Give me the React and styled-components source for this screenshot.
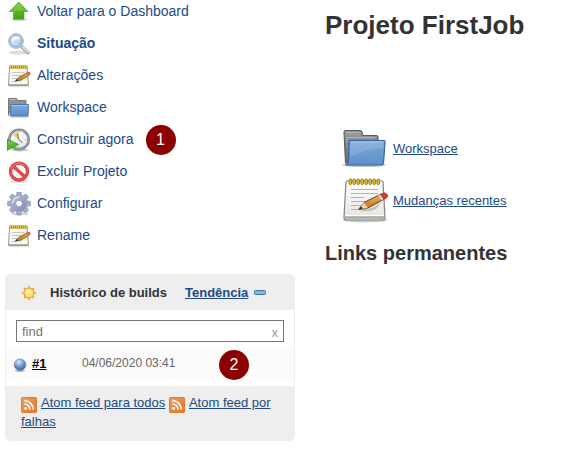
import React, { useState } from "react";
import styled, { createGlobalStyle } from "styled-components";

const GlobalStyle = createGlobalStyle`
  * {
    box-sizing: border-box;
  }
  body {
    margin: 0;
    background: #fff;
    color: #333;
    font-family: "Liberation Sans", Arial, sans-serif;
    font-size: 13px;
  }
  svg {
    display: block;
    flex-shrink: 0;
  }
`;

const Page = styled.div`
  display: grid;
  grid-template-columns: 290px minmax(0, 1fr);
  gap: 30px;
  padding: 0 5px;
  @media (max-width: 500px) {
    grid-template-columns: minmax(0, 1fr);
  }
`;
const Tasks = styled.nav`
  display: flex;
  flex-direction: column;
  gap: 8px;
`;
const Task = styled.div`
  display: flex;
  align-items: center;
  gap: 12px;
  height: 24px;
  padding-left: 2px;
`;
const TaskLink = styled.a`
  display: flex;
  gap: 6px;
  color: #204a87;
  font-size: 14px;
  line-height: 22px;
  font-weight: ${({ $active }) => ($active ? "bold" : "normal")};
  text-decoration: none;
`;
const Badge = styled.span`
  display: flex;
  align-items: center;
  justify-content: center;
  flex-shrink: 0;
  width: 30px;
  height: 30px;
  border-radius: 50%;
  background: #8b0000;
  color: #fff;
  font-size: 16px;
`;
const Builds = styled.section`
  margin-top: 26px;
  border: 1px solid #eee;
  border-radius: 5px;
  overflow: hidden;
`;
const BuildsHeader = styled.header`
  display: flex;
  align-items: center;
  height: 35px;
  padding: 0 15px;
  background: #eee;
  h2 {
    margin: 0 18px 0 13px;
    font-size: 13px;
  }
`;
const Link = styled.a`
  color: #204a87;
  font-size: 13px;
  font-weight: ${({ $bold }) => ($bold ? "bold" : "normal")};
  line-height: 18px;
`;
const CollapseButton = styled.button`
  margin: 0 0 0 6px;
  padding: 0;
  border: 0;
  background: none;
`;
const Search = styled.div`
  display: flex;
  align-items: center;
  height: 22px;
  margin: 10px 10px 8px;
  border: 1px solid #767676;
  input {
    flex: 1;
    min-width: 0;
    padding: 0 5px;
    border: 0;
    outline: 0;
    background: none;
    color: #757575;
    font: inherit;
  }
  input::placeholder {
    color: #757575;
  }
  button {
    padding: 2px 5px 0;
    border: 0;
    background: none;
    color: #999;
    font: inherit;
  }
`;
const BuildTable = styled.table`
  width: 100%;
  margin-bottom: 7px;
  border-collapse: collapse;
  background: #fbfbfb;
  td {
    height: 29px;
    padding: 0;
  }
`;
const BuildRow = styled.div`
  display: flex;
  align-items: center;
  height: 29px;
  padding-left: 7px;
`;
const BuildLink = styled.a`
  width: 50px;
  margin-left: 5px;
  padding-bottom: 3px;
  color: #000;
  font-weight: bold;
`;
const BuildDate = styled.span`
  width: 137px;
  padding-bottom: 3px;
  color: #666;
  font-size: 12px;
`;
const Feeds = styled.footer`
  padding: 8px 15px 9px;
  background: #eee;
  line-height: 18px;
  svg {
    display: inline-block;
    margin-right: 4px;
    vertical-align: -6px;
  }
`;
const Main = styled.main`
  h1 {
    margin: 0;
    padding-top: 10px;
    font-size: 26px;
    line-height: 30px;
  }
  h2 {
    margin: 17px 0 0;
    font-size: 20px;
    line-height: 24px;
  }
`;
const Shortcuts = styled.div`
  display: flex;
  flex-direction: column;
  gap: 4px;
  margin-top: 84px;
  padding-left: 16px;
`;
const Shortcut = styled.div`
  display: flex;
  align-items: center;
  gap: 4px;
  ${Link} {
    padding-top: 2px;
  }
`;

const Icon = ({ size = 24, children }) => (
  <svg width={size} height={size} viewBox="0 0 48 48" aria-hidden="true">
    {children}
  </svg>
);

const Gradient = ({ id, from, to, diagonal }) => (
  <linearGradient id={id} x1="0" y1="0" x2={diagonal ? 1 : 0} y2="1">
    <stop offset="0" stopColor={from} />
    <stop offset="1" stopColor={to} />
  </linearGradient>
);

const UpIcon = () => (
  <Icon>
    <Gradient id="up" from="#7cc63a" to="#43a012" />
    <ellipse cx="24" cy="39" rx="17" ry="3" fill="#000" opacity=".16" />
    <path
      d="M23.500 4 L42 23 H34 V38.500 H13 V23 H5 Z"
      fill="url(#up)"
      stroke="#479c1c"
      strokeWidth="1.200"
      strokeLinejoin="round"
    />
    <path d="M23.500 7 L36 21 H16 V32 L13.500 22 H9 Z" fill="#b5ee74" opacity=".25" />
  </Icon>
);

const SearchIcon = () => (
  <Icon>
    <Gradient id="lens" from="#f1f8ff" to="#9cc4f0" diagonal />
    <ellipse cx="23" cy="41" rx="20" ry="4" fill="#000" opacity=".13" />
    <path d="M29 29 L42 41" stroke="#9a9b9b" strokeWidth="7" strokeLinecap="round" />
    <path d="M31 30 L42 40" stroke="#dededc" strokeWidth="4" strokeLinecap="round" />
    <circle cx="18" cy="18" r="15" fill="#e0e2e4" stroke="#a9abaa" strokeWidth="1.500" />
    <circle cx="18" cy="18" r="12" fill="url(#lens)" stroke="#6e98cf" strokeWidth="2" />
    <path d="M9 19 Q10 9 19 9 Q25 9 27 13 Q18 13 9 19Z" fill="#fff" opacity=".75" />
  </Icon>
);

const NotepadIcon = () => (
  <Icon size={48}>
    <Gradient id="paper" from="#fff" to="#e3e3e0" />
    <Gradient id="pencil" from="#efb76b" to="#b66c16" />
    <ellipse cx="24" cy="44" rx="22" ry="2.500" fill="#000" opacity=".2" />
    <path
      d="M6 5 H41 Q42 5 42 6 L44 41 Q44 44 42 44 H5 Q3 44 3 41 L5 6 Q5 5 6 5Z"
      fill="url(#paper)"
      stroke="#83857f"
      strokeWidth="1.200"
    />
    <path d="M4 39.500 H43" stroke="#fff" strokeWidth="1" />
    <path d="M4 41.500 H43.500" stroke="#aaa" strokeWidth="2.500" />
    <path d="M10 13.500 H37 M10 17.500 H37 M10 21.500 H23 M10 25.500 H31 M10 29.500 H27 M10 33.500 H25" stroke="#b4b4b0" />
    {[9, 13, 17, 21, 25, 29, 33, 37].map((x) => (
      <rect key={x} x={x - 1} y="3" width="2.600" height="5.500" rx="1.300" fill="#e4c52c" stroke="#85700a" strokeWidth=".9" />
    ))}
    <path d="M18 35 Q31 34 41 26 L35 33 Q28 36 18 35Z" fill="#000" opacity=".2" />
    <path
      d="M17.500 33.500 L23 26.500 L40 18 L43.500 23 L27 32 Z"
      fill="url(#pencil)"
      stroke="#69410f"
      strokeWidth="1"
      strokeLinejoin="round"
    />
    <path d="M17.500 33.500 L23 26.500 L27 32 Z" fill="#edcfaa" />
    <path d="M17.500 33.500 L20 30.500 L22 32.500 Z" fill="#222" />
    <path d="M40 18 L43.500 23 L46 21.500 Q48 19 45 17.500 Q43.500 16 40 18Z" fill="#df3632" stroke="#a71f20" strokeWidth=".7" />
    <path d="M38 19 L41.500 24" stroke="#d9d9d6" strokeWidth="2" />
  </Icon>
);

// simpler drawing for the task list, the big one gets muddy at 24px
const NoteIcon = () => (
  <Icon>
    <Gradient id="notePencil" from="#eaa845" to="#c27a1c" />
    <ellipse cx="24" cy="44" rx="21" ry="2.500" fill="#000" opacity=".12" />
    <path d="M5 7 H40 L43 43 H3Z" fill="#f5f5f3" stroke="#9c9d99" strokeWidth="2" strokeLinejoin="round" />
    <path d="M4 41 H43" stroke="#b5b5b2" strokeWidth="2" />
    <path d="M10 17 H35 M10 23 H29 M10 29 H21 M10 35 H19" stroke="#c6c6c3" strokeWidth="2" />
    <path d="M5 6 H41" stroke="#8f7b1d" strokeWidth="6" />
    <path d="M6 6 H40" stroke="#e6cc45" strokeWidth="5" strokeDasharray="2.500 1.500" />
    <path
      d="M17 34 L23 27 L41 17 L45 22 L27 33Z"
      fill="url(#notePencil)"
      stroke="#80531a"
      strokeWidth="1.500"
      strokeLinejoin="round"
    />
    <path d="M16 35 L20 30 L23 33Z" fill="#333" />
    <path d="M40 17 Q45 14 47 18 Q48 20 44 22Z" fill="#e45a4c" />
  </Icon>
);

const FolderIcon = () => (
  <Icon size={48}>
    <Gradient id="folderBack" from="#999" to="#6a6a69" />
    <Gradient id="folderFront" from="#7ea8d8" to="#5d8fc9" />
    <ellipse cx="23" cy="41" rx="22" ry="2" fill="#000" opacity=".25" />
    <path
      d="M4.500 39 L3 8 Q3 6.500 5 6.500 H19 Q21 6.500 22 11.500 H35 Q37 11.500 37 13 V39Z"
      fill="url(#folderBack)"
      stroke="#5b5b59"
      strokeWidth="1.100"
    />
    <path d="M5 8.500 H18 M5 13.500 H34" stroke="#b4b4b2" strokeWidth="1" />
    <path d="M5 10.500 H19 M5 15.500 H8 M5 18.500 H8 M5 22.500 H8" stroke="#9f9f9d" strokeWidth="1" />
    <path
      d="M9 16.500 H43 Q44.500 16.500 44 19 L42.500 39 Q42 41 40 41 H5 Q7 40 7.500 36 L8 18 Q8 16.500 9 16.500Z"
      fill="url(#folderFront)"
      stroke="#3465a4"
      strokeWidth="1.200"
    />
    <path d="M9.500 18 H42.500 L42 24 Q26 25 9 33Z" fill="#fff" opacity=".13" />
    <path d="M9.500 18 H42.800" stroke="#a9c7ea" />
  </Icon>
);

const SmallFolderIcon = () => (
  <Icon>
    <Gradient id="smallFolder" from="#83abdb" to="#5b8cc6" />
    <ellipse cx="24" cy="42" rx="21" ry="2" fill="#000" opacity=".15" />
    <path d="M3 39 V5 H19 L21 9 H38 V20 H8Z" fill="#929290" stroke="#777775" strokeWidth="2" strokeLinejoin="round" />
    <path d="M5 7 H17" stroke="#bcbcba" strokeWidth="2" />
    <path d="M8 17 H43 L42 40 H7Z" fill="url(#smallFolder)" stroke="#4577b4" strokeWidth="2" strokeLinejoin="round" />
    <path d="M9 19 H42" stroke="#a6c5e8" strokeWidth="2" />
  </Icon>
);

const ClockIcon = () => (
  <Icon>
    <Gradient id="clock" from="#fff" to="#dfe0e6" />
    <ellipse cx="25" cy="44" rx="18" ry="3" fill="#000" opacity=".2" />
    <circle cx="24" cy="23" r="19.500" fill="url(#clock)" stroke="#7b7d8d" strokeWidth="5" />
    <circle cx="24" cy="23" r="19.500" fill="none" stroke="#a9acb9" strokeWidth="2" />
    <path d="M24 23 V7 A16 16 0 0 0 11 14Z" fill="#ecd474" />
    <path d="M24 24 L20 12 M24 24 L31 29" stroke="#77746a" strokeWidth="2" />
    <path d="M24 7 V9 M37 23 H39 M24 37 V39 M35 12 L34 13" stroke="#999" strokeWidth="2" />
    <path d="M0 22 L23 33 L0 45Z" fill="#50b32a" stroke="#3b9a19" strokeWidth="1.500" />
    <path d="M2 25 L17 32 L2 34Z" fill="#9bdd6b" opacity=".4" />
  </Icon>
);

const DeleteIcon = () => (
  <Icon>
    <ellipse cx="24" cy="43" rx="18" ry="3" fill="#000" opacity=".12" />
    <circle cx="24" cy="23" r="17" fill="#fff" stroke="#cf3030" strokeWidth="6.500" />
    <path d="M12 12 L36 34" stroke="#cf3030" strokeWidth="6.500" />
    <circle cx="24" cy="23" r="17" fill="none" stroke="#e45250" strokeWidth="4.500" />
    <path d="M12 12 L36 34" stroke="#e45250" strokeWidth="4.500" />
    <path d="M8 17 A17 17 0 0 1 36 12" fill="none" stroke="#ee8582" strokeWidth="1.500" />
  </Icon>
);

const GearIcon = () => (
  <Icon>
    <Gradient id="gear" from="#b9c0dc" to="#8188ae" diagonal />
    <ellipse cx="26" cy="44" rx="17" ry="3" fill="#000" opacity=".17" />
    <g fill="#a4abc9" stroke="#8087a8" strokeWidth="1">
      {[0, 45, 90, 135, 180, 225, 270, 315].map((angle) => (
        <path key={angle} d="M17 13 L20 0 H28 L31 13Z" transform={`rotate(${angle} 24 23)`} />
      ))}
    </g>
    <circle cx="24" cy="23" r="15.500" fill="url(#gear)" />
    <path d="M11 22 A13 13 0 0 1 24 10" fill="none" stroke="#dce0f0" strokeWidth="3" />
    <circle cx="24" cy="23" r="6.500" fill="#fff" stroke="#8b92b0" strokeWidth="1.500" />
  </Icon>
);

const SunIcon = () => (
  <Icon size={16}>
    <g fill="#f3a644">
      {[0, 45, 90, 135, 180, 225, 270, 315].map((angle) => (
        <path key={angle} d="M17 12 L24 1 L31 12Z" transform={`rotate(${angle} 24 24)`} />
      ))}
    </g>
    <circle cx="24" cy="24" r="14" fill="#ffe579" stroke="#efa33c" strokeWidth="2.500" />
    <circle cx="21" cy="20" r="7" fill="#fff3b0" />
  </Icon>
);

const BallIcon = () => (
  <Icon size={14}>
    <radialGradient id="ball" cx=".4" cy=".25" r=".75">
      <stop offset="0" stopColor="#d9e6f5" />
      <stop offset=".5" stopColor="#7da1ce" />
      <stop offset="1" stopColor="#34609a" />
    </radialGradient>
    <ellipse cx="24" cy="44" rx="18" ry="4" fill="#000" opacity=".25" />
    <circle cx="24" cy="23" r="20" fill="url(#ball)" stroke="#5c7ea6" strokeWidth="2" />
  </Icon>
);

const FeedIcon = () => (
  <Icon size={16}>
    <Gradient id="feed" from="#f2a057" to="#e2762a" diagonal />
    <rect width="48" height="48" rx="6" fill="url(#feed)" />
    <rect x="1.500" y="1.500" width="45" height="45" rx="5" fill="none" stroke="#e77a2c" strokeWidth="3" />
    <circle cx="14" cy="34" r="4.500" fill="#fff" />
    <path d="M10 21 A17 17 0 0 1 27 38 M10 11 A27 27 0 0 1 37 38" fill="none" stroke="#fff" strokeWidth="5" />
  </Icon>
);

const MinusIcon = () => (
  <svg width="12" height="5" viewBox="0 0 12 5" aria-hidden="true">
    <rect x=".5" y=".5" width="11" height="4" rx="1" fill="#8fb3dc" stroke="#4272aa" />
  </svg>
);

const tasks = [
  { label: "Voltar para o Dashboard", icon: <UpIcon /> },
  { label: "Situação", icon: <SearchIcon />, active: true },
  { label: "Alterações", icon: <NoteIcon /> },
  { label: "Workspace", icon: <SmallFolderIcon /> },
  { label: "Construir agora", icon: <ClockIcon />, badge: 1 },
  { label: "Excluir Projeto", icon: <DeleteIcon /> },
  { label: "Configurar", icon: <GearIcon /> },
  { label: "Rename", icon: <NoteIcon /> },
];

const BuildHistory = () => {
  const [query, setQuery] = useState("");
  return (
    <Builds>
      <BuildsHeader>
        <SunIcon />
        <h2>Histórico de builds</h2>
        <Link href="#trend" $bold>
          Tendência
        </Link>
        <CollapseButton type="button" aria-label="Recolher">
          <MinusIcon />
        </CollapseButton>
      </BuildsHeader>
      <Search>
        <input
          aria-label="find"
          placeholder="find"
          value={query}
          onChange={(e) => setQuery(e.target.value)}
        />
        <button type="button" onClick={() => setQuery("")}>
          x
        </button>
      </Search>
      <BuildTable>
        <tbody>
          <tr>
            <td>
              <BuildRow>
                <BallIcon />
                <BuildLink href="#1">#1</BuildLink>
                <BuildDate>04/06/2020 03:41</BuildDate>
                <Badge>2</Badge>
              </BuildRow>
            </td>
          </tr>
        </tbody>
      </BuildTable>
      <Feeds>
        <FeedIcon />
        <Link href="#all">Atom feed para todos</Link> <FeedIcon />
        <Link href="#failed">Atom feed por falhas</Link>
      </Feeds>
    </Builds>
  );
};

const App = () => {
  return (
    <>
      <GlobalStyle />
      <Page>
        <aside>
          <Tasks>
            {tasks.map((task) => (
              <Task key={task.label}>
                <TaskLink href="#task" $active={task.active}>
                  {task.icon}
                  {task.label}
                </TaskLink>
                {task.badge && <Badge>{task.badge}</Badge>}
              </Task>
            ))}
          </Tasks>
          <BuildHistory />
        </aside>
        <Main>
          <h1>Projeto FirstJob</h1>
          <Shortcuts>
            <Shortcut>
              <FolderIcon />
              <Link href="#workspace">Workspace</Link>
            </Shortcut>
            <Shortcut>
              <NotepadIcon />
              <Link href="#changes">Mudanças recentes</Link>
            </Shortcut>
          </Shortcuts>
          <h2>Links permanentes</h2>
        </Main>
      </Page>
    </>
  );
};

export default App;
